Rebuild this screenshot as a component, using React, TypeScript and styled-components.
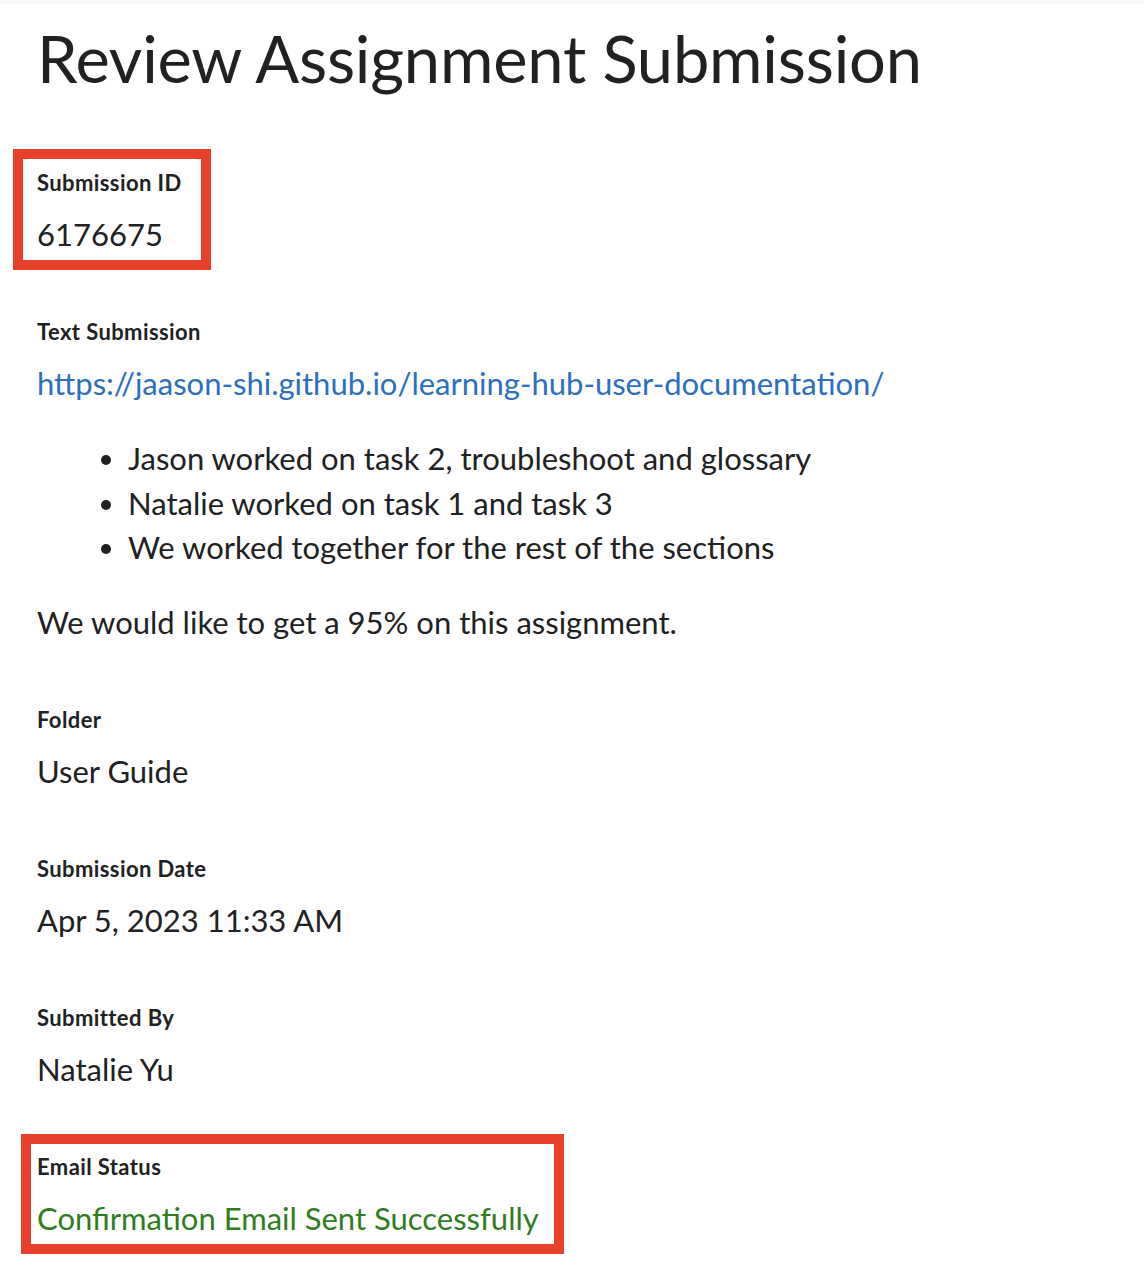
import React from 'react'
import styled, { createGlobalStyle, css } from 'styled-components'

const GlobalStyle = createGlobalStyle`
  body {
    margin: 0;
    background: #ffffff;
    font-family: 'Lato', 'Noto Sans', sans-serif;
    color: #202122;
  }
`

type Frame = { top: number; right: number; bottom: number; left: number }

interface FieldData {
  label: string
  value: React.ReactNode
  frame?: Frame
  success?: boolean
}

const BORDER = 10

const TopStrip = styled.div`
  height: 4px;
  background: #f8f8f8;
`

const Page = styled.main`
  padding: 15px 0 40px 37px;
`

const Title = styled.h1`
  margin: 0 0 72px;
  font-size: 65px;
  line-height: 78px;
  font-weight: 400;
  letter-spacing: -0.2px;
`

const FieldList = styled.div`
  display: flex;
  flex-direction: column;
  align-items: flex-start;
  gap: 61px;
`

const Field = styled.section<{ $frame?: Frame }>`
  display: flex;
  flex-direction: column;
  gap: 15px;

  ${({ $frame }) =>
    $frame &&
    css`
      border: ${BORDER}px solid #e8412b;
      padding: ${$frame.top}px ${$frame.right}px ${$frame.bottom}px ${$frame.left}px;
      margin: -${$frame.top + BORDER}px 0 -${$frame.bottom + BORDER}px -${$frame.left + BORDER}px;
    `}
`

const Label = styled.h2`
  margin: 0;
  font-size: 22px;
  line-height: 28px;
  font-weight: 700;
  letter-spacing: 0.4px;
`

const Value = styled.div<{ $success?: boolean }>`
  font-size: 31px;
  line-height: 45px;
  color: ${({ $success }) => ($success ? '#2f7d1f' : '#202122')};
`

const RichText = styled.div`
  font-size: 31px;
  line-height: 45px;

  p {
    margin: 0 0 30px;
  }

  p:last-child {
    margin-bottom: 0;
  }

  ul {
    margin: 0 0 30px;
    padding-left: 91px;
    line-height: 44.5px;
  }

  a {
    color: #2c6ebf;
    text-decoration: none;
  }
`

const fields: FieldData[] = [
  {
    label: 'Submission ID',
    value: '6176675',
    frame: { top: 10, right: 19, bottom: 3, left: 14 },
  },
  {
    label: 'Text Submission',
    value: (
      <RichText>
        <p>
          <a href="#">https://jaason-shi.github.io/learning-hub-user-documentation/</a>
        </p>
        <ul>
          <li>Jason worked on task 2, troubleshoot and glossary</li>
          <li>Natalie worked on task 1 and task 3</li>
          <li>We worked together for the rest of the sections</li>
        </ul>
        <p>We would like to get a 95% on this assignment.</p>
      </RichText>
    ),
  },
  { label: 'Folder', value: 'User Guide' },
  { label: 'Submission Date', value: 'Apr 5, 2023 11:33 AM' },
  { label: 'Submitted By', value: 'Natalie Yu' },
  {
    label: 'Email Status',
    value: 'Confirmation Email Sent Successfully',
    frame: { top: 9, right: 15, bottom: 3, left: 6 },
    success: true,
  },
]

export default function App() {
  return (
    <>
      <GlobalStyle />
      <TopStrip />
      <Page>
        <Title>Review Assignment Submission</Title>
        <FieldList>
          {fields.map((field) => (
            <Field key={field.label} $frame={field.frame}>
              <Label>{field.label}</Label>
              <Value $success={field.success}>{field.value}</Value>
            </Field>
          ))}
        </FieldList>
      </Page>
    </>
  )
}
